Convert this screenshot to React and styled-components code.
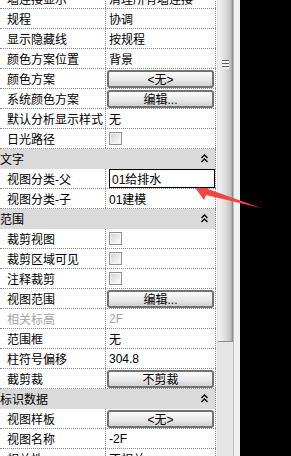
import React from "react";
import styled, { createGlobalStyle } from "styled-components";

const GlobalStyle = createGlobalStyle`
  html, body {
    margin: 0;
    padding: 0;
    background: #000;
  }
  body {
    font-family: "Liberation Sans", "Noto Sans CJK SC", sans-serif;
    font-size: 12px;
  }
`;

const Screen = styled.div`
  position: relative;
  display: flex;
  width: 291px;
  height: 456px;
  overflow: hidden;
  background: #000;
`;

const Panel = styled.div`
  width: 216px;
  height: 456px;
  overflow: hidden;
  background: #fff;
`;

const List = styled.div`
  margin-top: -11px;
  display: flex;
  flex-direction: column;
`;

const Row = styled.div`
  display: grid;
  grid-template-columns: 106px 110px;
  height: 20px;
  box-sizing: border-box;
  border-bottom: 1px dotted #8a8a8a;
`;

const Label = styled.div`
  display: flex;
  align-items: center;
  padding-left: 7px;
  border-right: 1px dotted #8a8a8a;
  color: ${(p) => (p.$disabled ? "#a3a3a3" : "#000")};
  white-space: nowrap;
  overflow: hidden;
`;

const Value = styled.div`
  display: flex;
  align-items: center;
  padding-left: 3px;
  border-right: 1px dotted #8a8a8a;
  color: ${(p) => (p.$disabled ? "#a3a3a3" : "#000")};
  white-space: nowrap;
  overflow: hidden;
`;

const EditBox = styled.div`
  display: flex;
  align-items: center;
  height: 19px;
  margin-top: -1px;
  box-sizing: border-box;
  width: 108px;
  padding-left: 2px;
  border: 1px solid #000;
  background: #fff;
  position: relative;
  z-index: 1;
`;

const Button = styled.div`
  display: flex;
  align-items: center;
  justify-content: center;
  width: 107px;
  height: 18px;
  margin-left: -2px;
  box-sizing: border-box;
  border: 2px solid #727272;
  border-radius: 3px;
  background: linear-gradient(#fbfbfb, #e9e9e9 55%, #d2d2d2);
  color: #000;
`;

const Check = styled.div`
  width: 13px;
  height: 13px;
  box-sizing: border-box;
  border: 1px solid #8e8f8f;
  box-shadow: inset 0 0 0 1px #f6f6f6;
  background: linear-gradient(135deg, #cfcfcf, #f2f2f2 70%, #ffffff);
`;

const Header = styled.div`
  display: flex;
  align-items: center;
  justify-content: space-between;
  height: 20px;
  box-sizing: border-box;
  padding: 0 7px 0 0;
  background: #dadada;
  border-right: 1px dotted #8a8a8a;
  border-bottom: 1px solid #dadada;
  color: #000;
`;

const HeaderTitle = styled.span`
  padding-left: 0;
`;

const ScrollBar = styled.div`
  display: flex;
  width: 24px;
  height: 456px;
`;

const Track = styled.div`
  width: 17px;
  box-sizing: border-box;
  padding-left: 1px;
  background: #e6e6e6;
  border-left: 1px solid #f4f4f4;
`;

const Thumb = styled.div`
  width: 15px;
  height: 342px;
  box-sizing: border-box;
  padding-top: 60px;
  display: flex;
  justify-content: center;
  border-right: 1px solid #8c8c8c;
  border-bottom: 1px solid #8c8c8c;
  background: linear-gradient(90deg, #f3f3f3, #dedede 50%, #c6c6c6 85%, #a9a9a9);
`;

const Grip = styled.div`
  width: 7px;
  height: 9px;
  background: repeating-linear-gradient(#5e5e5e 0 1px, #f4f4f4 1px 3px);
`;

const Edge = styled.div`
  width: 7px;
  box-sizing: border-box;
  border-left: 1px solid #bdbdbd;
  background: #f0f0f0;
`;

const Overlay = styled.svg`
  position: absolute;
  left: 0;
  top: 0;
  pointer-events: none;
`;

const rows = [
  { label: "墙连接显示", value: "清理所有墙连接" },
  { label: "规程", value: "协调" },
  { label: "显示隐藏线", value: "按规程" },
  { label: "颜色方案位置", value: "背景" },
  { label: "颜色方案", button: "<无>" },
  { label: "系统颜色方案", button: "编辑..." },
  { label: "默认分析显示样式", value: "无" },
  { label: "日光路径", check: true },
  { header: "文字" },
  { label: "视图分类-父", value: "01给排水", editing: true },
  { label: "视图分类-子", value: "01建模" },
  { header: "范围" },
  { label: "裁剪视图", check: true },
  { label: "裁剪区域可见", check: true },
  { label: "注释裁剪", check: true },
  { label: "视图范围", button: "编辑..." },
  { label: "相关标高", value: "2F", disabled: true },
  { label: "范围框", value: "无" },
  { label: "柱符号偏移", value: "304.8" },
  { label: "截剪裁", button: "不剪裁" },
  { header: "标识数据" },
  { label: "视图样板", button: "<无>" },
  { label: "视图名称", value: "-2F" },
  { label: "相关性", value: "不相关" },
];

const Collapse = () => (
  <svg width="7" height="9" viewBox="0 0 7 9">
    <polyline points="0.5,4 3.5,1 6.5,4" fill="none" stroke="#000" strokeWidth="1.3" />
    <polyline points="0.5,8 3.5,5 6.5,8" fill="none" stroke="#000" strokeWidth="1.3" />
  </svg>
);

const renderValue = (r) => {
  if (r.button) return <Button>{r.button}</Button>;
  if (r.check) return <Check />;
  if (r.editing) return <EditBox>{r.value}</EditBox>;
  return r.value;
};

const App = () => {
  return (
    <Screen>
      <GlobalStyle />
      <Panel>
        <List>
          {rows.map((r, i) =>
            r.header ? (
              <Header key={i}>
                <HeaderTitle>{r.header}</HeaderTitle>
                <Collapse />
              </Header>
            ) : (
              <Row key={i}>
                <Label $disabled={r.disabled}>{r.label}</Label>
                <Value $disabled={r.disabled}>{renderValue(r)}</Value>
              </Row>
            )
          )}
        </List>
      </Panel>
      <ScrollBar>
        <Track>
          <Thumb>
            <Grip />
          </Thumb>
        </Track>
        <Edge />
      </ScrollBar>
      <Overlay width="291" height="456" viewBox="0 0 291 456">
        <polygon
          points="194,186 213,182 208,189 261,208 206,195 204,200"
          fill="#f2453d"
        />
      </Overlay>
    </Screen>
  );
};

export default App;
